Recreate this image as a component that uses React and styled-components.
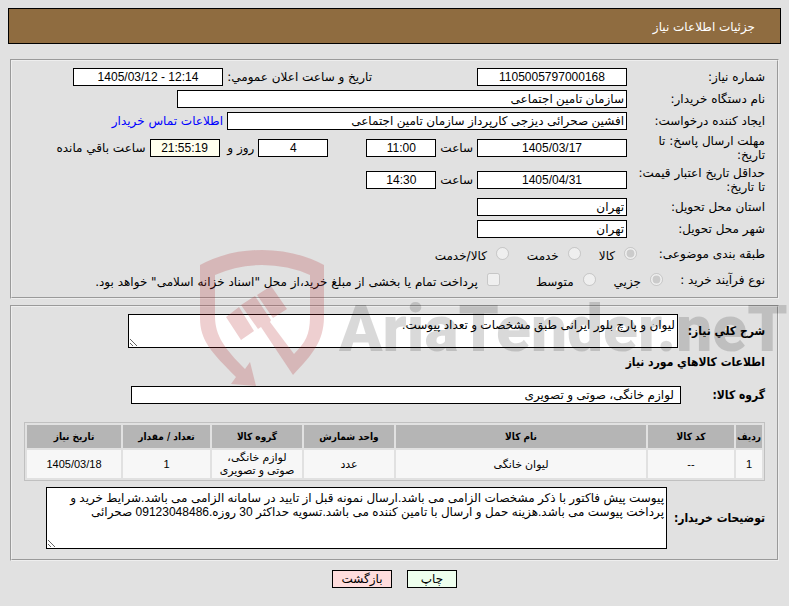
import React from "react";
import styled, { createGlobalStyle } from "styled-components";

const GlobalStyle = createGlobalStyle`
  body {
    margin: 0;
    background: #e1e1e1;
    color: #000;
    font-family: "DejaVu Sans", sans-serif;
    font-size: 12px;
    line-height: 14px;
  }

  * {
    box-sizing: border-box;
  }
`;

const Page = styled.div`
  position: relative;
  direction: rtl;
  padding: 8px;
  overflow: hidden;
`;

const Header = styled.header`
  display: flex;
  align-items: center;
  height: 36px;
  padding: 0 25px;
  margin-bottom: 15px;
  border: 1px solid #000;
  background: #8f6c40;
`;

const Title = styled.h1`
  margin: 0;
  padding-top: 2px;
  color: #fff;
  font-size: 12px;
  font-weight: normal;
`;

const Panel = styled.fieldset`
  min-width: 0;
  margin: 0 2px 6px;
  padding: ${props => props.$padding || "5px 12px"};
  border: 2px groove #eee;
`;

const Row = styled.div`
  display: flex;
  align-items: center;
  gap: 4px;
  min-height: ${props => props.$height || 22}px;
`;

const Label = styled.label`
  flex: none;
  width: ${props => props.$width || 134}px;
`;

const BoldLabel = styled.label`
  flex: none;
  min-width: ${props => props.$width || 0}px;
  font-family: "DejaVu Sans Condensed", "DejaVu Sans", sans-serif;
  font-weight: bold;
`;

const Input = styled.input`
  flex: 0 1 ${props => props.$width || 150}px;
  min-width: 0;
  height: 18px;
  margin: 0;
  padding: 1px ${props => props.$pad || 2}px;
  border: 1px solid #000;
  border-radius: 0;
  background: ${props => props.$bg || "#fff"};
  color: #000;
  font-family: "Liberation Sans", "DejaVu Sans", sans-serif;
  font-size: 12px;
  text-align: ${props => (props.$center ? "center" : "right")};
`;

const Textarea = styled.textarea`
  flex: 0 1 ${props => props.$width}px;
  min-width: 0;
  height: ${props => props.$height}px;
  margin: 0;
  padding: 3px 2px;
  border: 1px solid #000;
  border-radius: 0;
  background: #fff;
  color: #000;
  font-family: "Liberation Sans", "DejaVu Sans", sans-serif;
  font-size: 12px;
  line-height: 14px;
`;

const Group = styled.div`
  display: flex;
  align-items: center;
  gap: 4px;
  margin-right: ${props => props.$offset}px;
`;

const DateLabel = styled.label`
  width: 145px;
  white-space: nowrap;
`;

const Link = styled.a`
  color: #00f;
  text-decoration: none;
`;

const Option = styled.label`
  display: flex;
  align-items: center;
  gap: 9px;
  margin-left: ${props => (props.$wide ? 32 : 14)}px;
  white-space: nowrap;

  input {
    width: 13px;
    height: 13px;
    margin: 0;
  }

  span {
    padding-top: 4px;
  }
`;

const SubTitle = styled.h2`
  margin: 7px 0 17px;
  font-family: "DejaVu Sans Condensed", "DejaVu Sans", sans-serif;
  font-size: 12px;
  line-height: 14px;
`;

const Table = styled.table`
  width: 100%;
  margin: 18px 0 6px;
  table-layout: fixed;
  border: 1px solid #c0c0c0;
  border-collapse: separate;
  border-spacing: 2px;
  font-family: "Liberation Sans", "DejaVu Sans", sans-serif;
  font-size: 11px;
  line-height: 13px;
  text-align: center;

  th {
    height: 23px;
    padding: 1px 0;
    background: #b5b5b5;
    font-family: "DejaVu Sans Condensed", "DejaVu Sans", sans-serif;
    font-size: 10px;
  }

  td {
    height: 28px;
    padding: 1px 6px;
    background: #f7f7f7;
  }
`;

const Col = styled.col`
  width: ${props => (props.$width ? props.$width + "px" : "auto")};
`;

const Actions = styled.div`
  display: flex;
  justify-content: center;
  gap: 15px;
  padding: 3px 0 10px;
`;

const Button = styled.button`
  width: ${props => props.$width}px;
  height: 18px;
  padding: 0;
  border: 1px solid #000;
  background: ${props => props.$bg};
  color: #000;
  font: inherit;
`;

const Watermark = styled.svg`
  position: absolute;
  top: 250px;
  left: 200px;
  overflow: visible;
  pointer-events: none;

  path {
    fill: rgba(178, 37, 42, 0.22);
  }

  text {
    fill: rgba(0, 0, 0, 0.15);
    font-family: Roboto, sans-serif;
    font-size: 64px;
    font-weight: 900;
    direction: ltr;
  }
`;

const columns = [
  { title: "ردیف", width: 26, value: "1" },
  { title: "کد کالا", width: 86, value: "--" },
  { title: "نام کالا", value: "لیوان خانگی" },
  { title: "واحد شمارش", width: 90, value: "عدد" },
  { title: "گروه کالا", width: 90, value: "لوازم خانگی، صوتی و تصویری" },
  { title: "تعداد / مقدار", width: 87, value: "1" },
  { title: "تاریخ نیاز", width: 94, value: "1405/03/18" }
];

const buyerNotes =
  "پیوست پیش فاکتور با ذکر مشخصات الزامی می باشد.ارسال نمونه قبل از تایید در سامانه الزامی می باشد.شرایط خرید و پرداخت پیوست می باشد.هزینه حمل و ارسال با تامین کننده می باشد.تسویه حداکثر 30 روزه.09123048486 صحرائی";

const Logo = () => (
  <Watermark width="589" height="136" aria-hidden="true">
    <path d="M0 15 Q28 0 62 0 Q96 0 124 15 V66 C124 90 114 103 93 125 L61 77 L58 79 L41 55 L55 46 L71 70 L70 72 L94 104 C106 92 110 84 110 66 V25 Q88 15 62 15 Q37 15 15 25 V66 C15 86 25 99 45 119 L50 112 L56 136 L31 134 L36 127 C12 103 0 91 0 68 Z" />
    <path d="M26 67 L39 57 L54 81 L41 90 Z M57 45 L71 36 L87 59 L73 68 Z" />
    <text x="139" y="101">AriaTender.neT</text>
  </Watermark>
);

const App = () => {
  return (
    <Page>
      <GlobalStyle />
      <Header>
        <Title>جزئیات اطلاعات نیاز</Title>
      </Header>

      <Panel>
        <Row>
          <Label htmlFor="number">شماره نیاز:</Label>
          <Input id="number" $center readOnly defaultValue="1105005797000168" />
          <Group $offset={101}>
            <DateLabel htmlFor="announce">تاریخ و ساعت اعلان عمومي:</DateLabel>
            <Input id="announce" dir="ltr" $center readOnly defaultValue="1405/03/12 - 12:14" />
          </Group>
        </Row>
        <Row>
          <Label htmlFor="buyer">نام دستگاه خریدار:</Label>
          <Input id="buyer" $width={450} readOnly defaultValue="سازمان تامین اجتماعی" />
        </Row>
        <Row>
          <Label htmlFor="creator">ایجاد کننده درخواست:</Label>
          <Input
            id="creator"
            $width={400}
            readOnly
            defaultValue="افشین صحرائی دیزجی کارپرداز سازمان تامین اجتماعی"
          />
          <Link href="#contact">اطلاعات تماس خریدار</Link>
        </Row>
        <Row $height={32}>
          <Label htmlFor="deadline">
            مهلت ارسال پاسخ: تا
            <br />
            تاریخ:
          </Label>
          <Input id="deadline" $center readOnly defaultValue="1405/03/17" />
          <label htmlFor="deadlineHour">ساعت</label>
          <Input id="deadlineHour" $width={70} $center readOnly defaultValue="11:00" />
          <Group $offset={34}>
            <Input id="days" $width={70} $center readOnly defaultValue="4" />
            <label htmlFor="days">روز و&nbsp;</label>
            <Input id="left" $width={70} $bg="#ffffee" $center readOnly defaultValue="21:55:19" />
            <label htmlFor="left">ساعت باقي مانده</label>
          </Group>
        </Row>
        <Row $height={32}>
          <Label htmlFor="validity">
            حداقل تاریخ اعتبار قیمت:
            <br />
            تا تاریخ:
          </Label>
          <Input id="validity" $center readOnly defaultValue="1405/04/31" />
          <label htmlFor="validityHour">ساعت</label>
          <Input id="validityHour" $width={70} $center readOnly defaultValue="14:30" />
        </Row>
        <Row>
          <Label htmlFor="province">استان محل تحویل:</Label>
          <Input id="province" readOnly defaultValue="تهران" />
        </Row>
        <Row>
          <Label htmlFor="city">شهر محل تحویل:</Label>
          <Input id="city" readOnly defaultValue="تهران" />
        </Row>
        <Row $height={27}>
          <Label as="span" $width={124}>طبقه بندی موضوعی:</Label>
          <Option><input type="radio" name="subject" disabled defaultChecked /><span>کالا</span></Option>
          <Option><input type="radio" name="subject" disabled /><span>خدمت</span></Option>
          <Option><input type="radio" name="subject" disabled /><span>کالا/خدمت</span></Option>
        </Row>
        <Row $height={25}>
          <Label as="span" $width={98}>نوع فرآیند خرید :</Label>
          <Option><input type="radio" name="process" disabled defaultChecked /><span>جزیي</span></Option>
          <Option $wide><input type="radio" name="process" disabled /><span>متوسط</span></Option>
          <Option>
            <input type="checkbox" disabled />
            <span>پرداخت تمام یا بخشی از مبلغ خرید،از محل "اسناد خزانه اسلامی" خواهد بود.</span>
          </Option>
        </Row>
      </Panel>

      <Panel $padding="7px 12px 10px">
        <Row>
          <BoldLabel htmlFor="summary" $width={83}>شرح کلي نیاز:</BoldLabel>
          <Textarea
            id="summary"
            $width={550}
            $height={34}
            readOnly
            defaultValue="لیوان و پارچ بلور ایرانی طبق مشخصات و تعداد پیوست."
          />
        </Row>
        <SubTitle>اطلاعات کالاهاي مورد نیاز</SubTitle>
        <Row $height={18}>
          <BoldLabel htmlFor="group" $width={80}>گروه کالا:</BoldLabel>
          <Input id="group" $width={550} $pad={6} readOnly defaultValue="لوازم خانگی، صوتی و تصویری" />
        </Row>
        <Table>
          <colgroup>
            {columns.map(col => (
              <Col key={col.title} $width={col.width} />
            ))}
          </colgroup>
          <thead>
            <tr>
              {columns.map(col => (
                <th key={col.title}>{col.title}</th>
              ))}
            </tr>
          </thead>
          <tbody>
            <tr>
              {columns.map(col => (
                <td key={col.title}>{col.value}</td>
              ))}
            </tr>
          </tbody>
        </Table>
        <Row>
          <BoldLabel htmlFor="notes" $width={94}>توضیحات خریدار:</BoldLabel>
          <Textarea id="notes" $width={621} $height={62} readOnly defaultValue={buyerNotes} />
        </Row>
      </Panel>

      <Actions>
        <Button type="button" $width={50} $bg="#eeffee">چاپ</Button>
        <Button type="button" $width={60} $bg="#ffdddd">بازگشت</Button>
      </Actions>
      <Logo />
    </Page>
  );
};

export default App;
